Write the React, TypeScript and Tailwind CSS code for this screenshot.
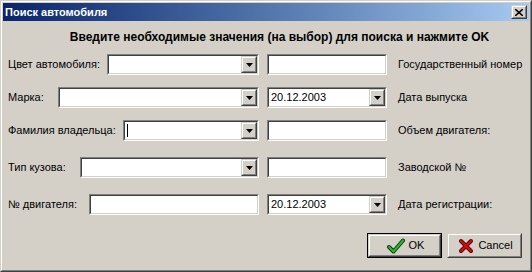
import type { ReactNode } from "react";

function Sunken({ children, className = "" }: { children?: ReactNode; className?: string }) {
  return (
    <div className={`border border-t-[#808080] border-l-[#808080] border-r-white border-b-white ${className}`}>
      <div className="flex h-full border border-t-[#404040] border-l-[#404040] border-r-[#d4d0c8] border-b-[#d4d0c8] bg-white">
        {children}
      </div>
    </div>
  );
}

function Raised({ children, className = "" }: { children?: ReactNode; className?: string }) {
  return (
    <div className={`border border-t-[#d4d0c8] border-l-[#d4d0c8] border-r-[#404040] border-b-[#404040] ${className}`}>
      <div className="flex h-full items-center justify-center border border-t-white border-l-white border-r-[#808080] border-b-[#808080] bg-[#d4d0c8]">
        {children}
      </div>
    </div>
  );
}

function DropButton() {
  return (
    <Raised className="h-[17px] w-[16px] shrink-0">
      <svg width="7" height="4" viewBox="0 0 7 4">
        <path d="M0 0h7L3.5 4z" fill="#000" />
      </svg>
    </Raised>
  );
}

function Combo({ width, value, caret }: { width: string; value?: string; caret?: boolean }) {
  return (
    <Sunken className={`h-[21px] ${width}`}>
      <div className="flex flex-1 items-center pl-[2px] leading-none">
        {caret && <span className="h-[13px] w-px bg-black" />}
        {value}
      </div>
      <DropButton />
    </Sunken>
  );
}

function Edit({ width }: { width: string }) {
  return <Sunken className={`h-[21px] ${width}`} />;
}

function Row({ label, left, right, rightLabel, className }: { label: string; left: ReactNode; right: ReactNode; rightLabel: string; className: string }) {
  return (
    <div className={`flex items-center ${className}`}>
      <div className="flex w-[251px] items-center justify-between">
        <span>{label}</span>
        {left}
      </div>
      <div className="ml-[8px]">{right}</div>
      <span className="ml-[11px]">{rightLabel}</span>
    </div>
  );
}

function CheckIcon() {
  return (
    <svg width="18" height="16" viewBox="0 0 18 16">
      <path d="M2 9 L6.5 13.5 L16 2.5" fill="none" stroke="#0b3b0b" strokeWidth="4" strokeLinecap="round" strokeLinejoin="round" />
      <path d="M2 9 L6.5 13.5 L16 2.5" fill="none" stroke="#2fb52f" strokeWidth="2" strokeLinecap="round" strokeLinejoin="round" />
    </svg>
  );
}

function CrossIcon() {
  return (
    <svg width="16" height="16" viewBox="0 0 16 16">
      <path d="M3 3 L13 13 M13 3 L3 13" fill="none" stroke="#5a0000" strokeWidth="4" strokeLinecap="round" />
      <path d="M3 3 L13 13 M13 3 L3 13" fill="none" stroke="#d01010" strokeWidth="2" strokeLinecap="round" />
    </svg>
  );
}

export default function App() {
  return (
    <div className="h-[272px] w-[532px] border border-t-[#d4d0c8] border-l-[#d4d0c8] border-r-[#404040] border-b-[#404040] font-['Liberation_Sans',Arial,sans-serif] text-[11px] text-black">
      <div className="flex h-full flex-col border border-t-white border-l-white border-r-[#808080] border-b-[#808080] bg-[#d4d0c8] p-px">
        <div className="flex h-[18px] items-center justify-between bg-linear-to-r from-[#0a246a] to-[#a6caf0] pl-[2px] pr-[2px]">
          <span className="text-[11px] font-bold text-white">Поиск автомобиля</span>
          <Raised className="h-[14px] w-[16px]">
            <svg width="8" height="7" viewBox="0 0 8 7">
              <path d="M0 0 L8 7 M8 0 L0 7" stroke="#000" strokeWidth="1.6" />
            </svg>
          </Raised>
        </div>

        <div className="flex flex-1 flex-col pl-[5px]">
          <div className="mt-[9px] pl-[22px] text-center text-[12px] font-bold leading-[14px]">
            Введите необходимые значения (на выбор) для поиска и нажмите OK
          </div>

          <Row className="mt-[10px]" label="Цвет автомобиля:" left={<Combo width="w-[152px]" />} right={<Edit width="w-[120px]" />} rightLabel="Государственный номер" />
          <Row className="mt-[12px]" label="Марка:" left={<Combo width="w-[201px]" />} right={<Combo width="w-[120px]" value="20.12.2003" />} rightLabel="Дата выпуска" />
          <Row className="mt-[12px]" label="Фамилия владельца:" left={<Combo width="w-[136px]" caret />} right={<Edit width="w-[120px]" />} rightLabel="Объем двигателя:" />
          <Row className="mt-[16px]" label="Тип кузова:" left={<Combo width="w-[179px]" />} right={<Edit width="w-[120px]" />} rightLabel="Заводской №" />
          <Row className="mt-[16px]" label="№ двигателя:" left={<Edit width="w-[170px]" />} right={<Combo width="w-[120px]" value="20.12.2003" />} rightLabel="Дата регистрации:" />

          <div className="mt-[18px] flex justify-end gap-[5px] pr-[7px]">
            <div className="h-[25px] w-[75px] border border-black">
              <Raised className="h-full w-full">
                <div className="flex items-center gap-[4px] pl-[2px]">
                  <CheckIcon />
                  <span>OK</span>
                </div>
              </Raised>
            </div>
            <Raised className="h-[25px] w-[75px]">
              <div className="flex items-center gap-[4px] pl-[2px]">
                <CrossIcon />
                <span>Cancel</span>
              </div>
            </Raised>
          </div>
        </div>
      </div>
    </div>
  );
}
